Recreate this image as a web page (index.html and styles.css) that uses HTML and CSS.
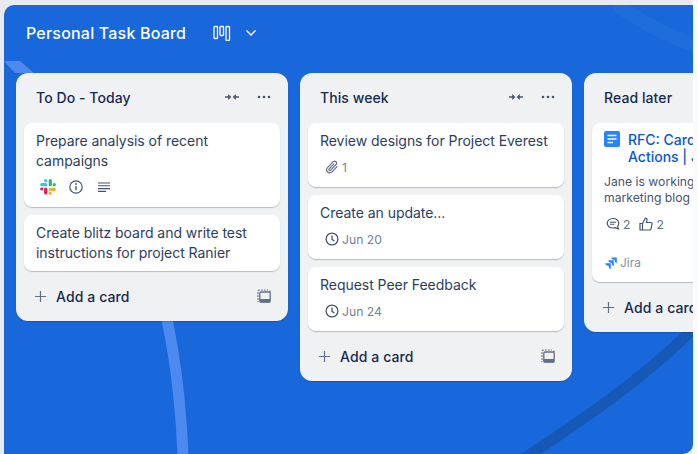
FILE: index.html
```html
<!DOCTYPE html>
<html lang="en">
<head>
<meta charset="utf-8">
<title>Personal Task Board</title>
<link rel="stylesheet" href="styles.css">
</head>
<body>
<svg width="0" height="0" class="defs">
  <symbol id="collapse" viewBox="0 0 14 10"><path d="M0 5h5M0 5h4" stroke="currentColor" stroke-width="1.500" fill="none"/><path d="M3.200 2 6.300 5 3.200 8z" fill="currentColor"/><path d="M14 5H9" stroke="currentColor" stroke-width="1.500" fill="none"/><path d="M10.800 2 7.700 5l3.100 3z" fill="currentColor"/></symbol>
  <symbol id="dots" viewBox="0 0 14 4"><circle cx="2" cy="2" r="1.300"/><circle cx="7" cy="2" r="1.300"/><circle cx="12" cy="2" r="1.300"/></symbol>
  <symbol id="plus" viewBox="0 0 14 14"><path d="M7 1v12M1 7h12" stroke="currentColor" stroke-width="1.300" fill="none"/></symbol>
  <symbol id="tmpl" viewBox="0 0 14 14"><path d="M1 11V2.500A1.500 1.500 0 0 1 2.500 1H11" fill="none" stroke="currentColor" stroke-width="1.200" stroke-dasharray="1.800 1.200"/><path d="M13 1.500V3M1 12v1" stroke="currentColor" stroke-width="1.200" fill="none"/><rect x="2.800" y="3" width="10.400" height="10.200" rx="1.200" fill="none" stroke="currentColor" stroke-width="1.300"/><path d="M3 10h10v2.500a1 1 0 0 1-1 1H4a1 1 0 0 1-1-1z" fill="currentColor"/></symbol>
  <symbol id="clock" viewBox="0 0 14 14"><circle cx="7" cy="7" r="5.900" fill="none" stroke="currentColor" stroke-width="1.300"/><path d="M7 3.500V7.300l2.300 1.700" fill="none" stroke="currentColor" stroke-width="1.300"/></symbol>
</svg>
<main class="board">
  <svg class="decor" viewBox="0 0 689 449" preserveAspectRatio="none" aria-hidden="true">
    <path d="M0 56 L16 56 L30 68 L11 68 Z" fill="#4d8aef"/>
    <path d="M25 72C100 120 170 240 179 449" fill="none" stroke="#4d8aef" stroke-width="11"/>
    <path d="M518 455C570 420 640 375 695 318" fill="none" stroke="#1558b5" stroke-width="11"/>
    <path d="M612 0C640 18 665 32 695 42" fill="none" stroke="#1f6ddd" stroke-width="14"/>
  </svg>
  <header class="board-head">
    <h1 class="board-title">Personal Task Board</h1>
    <svg class="board-icon" width="18" height="16" viewBox="0 0 18 16"><g fill="none" stroke="#fff" stroke-width="1.300"><rect x="1" y="1.500" width="3.500" height="12" rx=".8"/><rect x="7" y="1.500" width="3.500" height="9" rx=".8"/><rect x="13" y="1.500" width="3.500" height="14" rx=".8"/></g></svg>
    <svg class="board-chev" width="12" height="8" viewBox="0 0 12 8"><path d="M1.500 1.500 6 6l4.500-4.500" fill="none" stroke="#fff" stroke-width="1.500"/></svg>
  </header>
  <div class="lists">
    <section class="list">
      <div class="list-head">
        <h2 class="list-title">To Do - Today</h2>
        <svg class="ic-collapse"><use href="#collapse"/></svg>
        <svg class="ic-dots"><use href="#dots"/></svg>
      </div>
      <div class="cards">
        <article class="card">
          <p class="card-text">Prepare analysis of recent campaigns</p>
          <div class="badges icons-row">
            <svg class="ic-slack" width="16" height="16" viewBox="0 0 16 16">
              <path d="M3.300 10a1.600 1.600 0 1 1-1.600-1.600h1.600z M4.100 10a1.600 1.600 0 0 1 3.200 0v4a1.600 1.600 0 0 1-3.200 0z" fill="#e01e5a"/>
              <path d="M5.700 3.300a1.600 1.600 0 1 1 1.600-1.600v1.600z M5.700 4.100a1.600 1.600 0 0 1 0 3.200H1.700a1.600 1.600 0 0 1 0-3.200z" fill="#36c5f0"/>
              <path d="M12.700 5.700a1.600 1.600 0 1 1 1.600 1.600h-1.600z M11.900 5.700a1.600 1.600 0 0 1-3.200 0V1.700a1.600 1.600 0 0 1 3.200 0z" fill="#2eb67d"/>
              <path d="M10.300 12.700a1.600 1.600 0 1 1-1.600 1.600v-1.600z M10.300 11.900a1.600 1.600 0 0 1 0-3.200h4a1.600 1.600 0 0 1 0 3.200z" fill="#ecb22e"/>
            </svg>
            <svg class="ic-info" width="14" height="14" viewBox="0 0 14 14"><circle cx="7" cy="7" r="6.200" fill="none" stroke="currentColor" stroke-width="1.200"/><path d="M7 6v4.200" stroke="currentColor" stroke-width="1.400"/><circle cx="7" cy="4" r=".9" fill="currentColor"/></svg>
            <svg class="ic-lines" width="12" height="11" viewBox="0 0 12 11"><path d="M0 1h12M0 3.800h12M0 6.600h12M0 9.400h8" stroke="currentColor" stroke-width="1.100"/></svg>
          </div>
        </article>
        <article class="card">
          <p class="card-text">Create blitz board and write test instructions for project Ranier</p>
        </article>
      </div>
      <div class="add-row">
        <svg class="ic-plus"><use href="#plus"/></svg>
        <span class="add-label">Add a card</span>
        <svg class="ic-tmpl"><use href="#tmpl"/></svg>
      </div>
    </section>

    <section class="list">
      <div class="list-head">
        <h2 class="list-title">This week</h2>
        <svg class="ic-collapse"><use href="#collapse"/></svg>
        <svg class="ic-dots"><use href="#dots"/></svg>
      </div>
      <div class="cards">
        <article class="card">
          <p class="card-text">Review designs for Project Everest</p>
          <div class="badges meta-row">
            <svg class="ic-clip" width="14" height="14" viewBox="0 0 14 14"><path d="M12.300 6.300 7 11.800a3 3 0 0 1-4.500-4.200L8 1.900a2 2 0 0 1 3 2.800L5.700 10.200a1 1 0 0 1-1.500-1.400L9.200 3.700" fill="none" stroke="currentColor" stroke-width="1.200"/></svg>
            <span>1</span>
          </div>
        </article>
        <article class="card">
          <p class="card-text">Create an update...</p>
          <div class="badges meta-row">
            <svg class="ic-clock"><use href="#clock"/></svg>
            <span>Jun 20</span>
          </div>
        </article>
        <article class="card">
          <p class="card-text">Request Peer Feedback</p>
          <div class="badges meta-row">
            <svg class="ic-clock"><use href="#clock"/></svg>
            <span>Jun 24</span>
          </div>
        </article>
      </div>
      <div class="add-row">
        <svg class="ic-plus"><use href="#plus"/></svg>
        <span class="add-label">Add a card</span>
        <svg class="ic-tmpl"><use href="#tmpl"/></svg>
      </div>
    </section>

    <section class="list">
      <div class="list-head">
        <h2 class="list-title">Read later</h2>
      </div>
      <div class="cards">
        <article class="card link-card">
          <div class="link-head">
            <svg class="ic-doc" width="16" height="16" viewBox="0 0 16 16"><rect width="16" height="16" rx="2" fill="#2684ff"/><path d="M3.500 4.500h9M3.500 8h9M3.500 11.500h5.500" stroke="#fff" stroke-width="1.600"/></svg>
            <a class="link-title">RFC: Card<br>Actions | Jira</a>
          </div>
          <p class="link-desc">Jane is working on a<br>marketing blog to publish</p>
          <div class="social">
            <svg class="ic-chat" width="14" height="14" viewBox="0 0 14 14"><path d="M7 1.500c3.200 0 5.800 2 5.800 4.800 0 1.200-.5 2.200-1.200 3l.8 2.700-3-1.400c-.8.300-1.600.4-2.400.4-3.200 0-5.800-2-5.800-4.700S3.800 1.500 7 1.500Z" fill="none" stroke="currentColor" stroke-width="1.200"/><path d="M3.800 5.300h6.400M3.800 7.300h4.500" stroke="currentColor" stroke-width="1.100"/></svg>
            <span class="count">2</span>
            <svg class="ic-thumb" width="14" height="14" viewBox="0 0 14 14"><path d="M1 6.500h2.500V13H1zM3.500 6.500 6.300 1c1.200 0 1.900.8 1.700 2L7.500 5.500h4.300c.8 0 1.400.7 1.200 1.500l-1 4.800c-.2.700-.7 1.200-1.400 1.200H3.500" fill="none" stroke="currentColor" stroke-width="1.200"/></svg>
            <span class="count">2</span>
          </div>
          <div class="source">
            <svg class="ic-jira" width="12" height="12" viewBox="0 0 12 12"><path d="M11.800.4H6.300a2.400 2.400 0 0 0 2.400 2.400h1v1a2.400 2.400 0 0 0 2.100 2.300z M8.800 3.300H3.300a2.400 2.400 0 0 0 2.400 2.400h1v1a2.400 2.400 0 0 0 2.100 2.300z M5.800 6.300H.3a2.400 2.400 0 0 0 2.400 2.400h1v1a2.400 2.400 0 0 0 2.100 2.300z" fill="#2684ff"/></svg>
            <span>Jira</span>
          </div>
        </article>
      </div>
      <div class="add-row">
        <svg class="ic-plus"><use href="#plus"/></svg>
        <span class="add-label">Add a card</span>
      </div>
    </section>
  </div>
</main>
</body>
</html>
```
FILE: styles.css
```css
* { box-sizing: border-box; }
html, body { height: 100%; }
body {
  margin: 0;
  padding: 5px 5px 0 4px;
  height: 454px;
  overflow: hidden;
  background: linear-gradient(to right, #e8eaed 0, #e8eaed 692px, #fafbfc 693px);
  font-family: Inter, "Open Sans", sans-serif;
  color: #253858;
}
.defs { position: absolute; }
.board {
  position: relative;
  height: 449px;
  background: #1868db;
  border-radius: 10px 0 10px 0;
  overflow: hidden;
  padding: 0 0 0 12px;
}
.decor { position: absolute; left: 0; top: 0; width: 100%; height: 100%; }
.board-head {
  position: relative;
  display: flex;
  align-items: center;
  height: 68px;
  padding: 0 0 12px 10px;
}
.board-title {
  margin: 0;
  font-size: 16px;
  font-weight: 500;
  color: #fff;
  letter-spacing: .2px;
  width: 187px;
}
.board-icon { margin-right: 14px; }
.lists {
  position: relative;
  display: flex;
  align-items: flex-start;
  gap: 12px;
  width: 900px;
}
.list {
  width: 272px;
  flex: none;
  background: #f0f1f3;
  border-radius: 12px;
  box-shadow: 0 1px 1px rgba(9, 30, 66, .25);
  padding: 0 8px;
}
.list-head {
  display: flex;
  align-items: center;
  height: 50px;
  padding: 0 9px 2px 12px;
}
.list-title {
  margin: 0;
  flex: 1;
  font-size: 14px;
  font-weight: 500;
  color: #172b4d;
  letter-spacing: .08px;
}
.ic-collapse { width: 14px; height: 10px; color: #44546f; margin-right: 18px; }
.ic-dots { width: 14px; height: 4px; fill: #44546f; }
.cards { display: flex; flex-direction: column; gap: 8px; }
.card {
  background: #fff;
  border-radius: 8px;
  box-shadow: 0 1px 1px rgba(9, 30, 66, .25);
  padding: 8px 12px;
}
.card-text {
  margin: 0;
  font-size: 14px;
  line-height: 20px;
  color: #2c3e5d;
  letter-spacing: -.04px;
}
.badges { display: flex; align-items: center; height: 20px; margin-top: 6px; margin-bottom: 2px; }
.icons-row { margin-left: 4px; gap: 14px; color: #44546f; }
.ic-slack { margin-right: -1px; }
.ic-lines { margin-left: 1px; }
.meta-row { margin-left: 5px; gap: 3px; font-size: 12.200px; color: #758195; }
.ic-clip { color: #626f86; }
.ic-clock { width: 14px; height: 14px; color: #44546f; }
.add-row {
  display: flex;
  align-items: center;
  height: 50px;
  padding: 0 9px 0 10px;
}
.ic-plus { width: 13px; height: 13px; color: #626f86; margin-right: 9px; }
.add-label { flex: 1; font-size: 14px; font-weight: 500; color: #172b4d; letter-spacing: .1px; }
.ic-tmpl { width: 14px; height: 14px; color: #626f86; }
.link-card { height: 159px; }
.link-head { display: flex; gap: 8px; white-space: nowrap; }
.ic-doc { flex: none; }
.link-title { font-size: 14px; line-height: 17px; font-weight: 500; color: #0c55cf; }
.link-desc { margin: 9px 0 0; font-size: 12.200px; line-height: 16px; color: #44546f; white-space: nowrap; }
.social { display: flex; align-items: center; height: 18px; margin: 9px 0 0 2px; color: #44546f; font-size: 12.200px; }
.count { margin: 0 9px 0 3px; color: #626f86; }
.source { display: flex; align-items: center; gap: 3px; margin: 22px 0 0 1px; font-size: 12px; color: #8590a2; }
```
